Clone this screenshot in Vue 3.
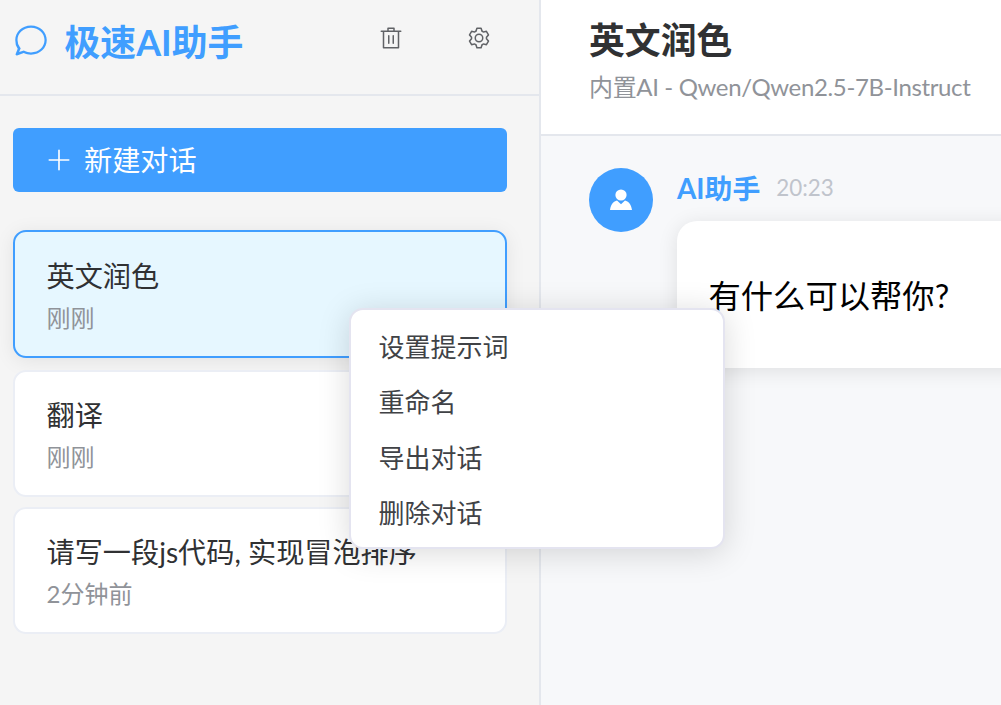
<script setup>
const items = [
  { title: '英文润色', time: '刚刚', active: true },
  { title: '翻译', time: '刚刚', active: false },
  { title: '请写一段js代码, 实现冒泡排序', time: '2分钟前', active: false },
]
const menu = ['设置提示词', '重命名', '导出对话', '删除对话']
</script>

<template>
  <div class="app">
    <aside class="sidebar">
      <header class="side-head">
        <div class="brand">
          <svg class="chat" viewBox="0 0 1024 1024"><path fill="currentColor" d="m174.72 855.68 135.296-45.12 23.936 12.352C382.72 848.256 444.16 864 512 864c223.744 0 384-159.872 384-352 0-192.832-159.104-352-384-352S128 319.168 128 512a341.12 341.12 0 0 0 69.248 204.288l21.632 28.8-44.16 110.528zm-59.52 94.272a32 32 0 0 1-40.64-41.984l59.456-148.672A404.48 404.48 0 0 1 64 512C64 284.8 255.04 96 512 96s448 188.8 448 416-191.04 416-448 416c-73.6 0-143.68-15.552-206.08-43.456z"/></svg>
          <h1>极速AI助手</h1>
        </div>
        <svg class="tool trash" viewBox="0 0 1024 1024"><path fill="currentColor" d="M160 256H96a32 32 0 0 1 0-64h256V95.936a32 32 0 0 1 32-32h256a32 32 0 0 1 32 32V192h256a32 32 0 1 1 0 64h-64v672a32 32 0 0 1-32 32H192a32 32 0 0 1-32-32zm448-64v-64H416v64zM224 896h576V256H224zm192-128a32 32 0 0 1-32-32V416a32 32 0 0 1 64 0v320a32 32 0 0 1-32 32m192 0a32 32 0 0 1-32-32V416a32 32 0 0 1 64 0v320a32 32 0 0 1-32 32"/></svg>
        <svg class="tool gear" viewBox="0 0 1024 1024"><path fill="currentColor" d="M600.704 64a32 32 0 0 1 30.464 22.208l35.2 109.376c14.784 7.232 28.928 15.36 42.432 24.512l112.384-24.192a32 32 0 0 1 34.432 15.36L944.32 364.8a32 32 0 0 1-4.032 37.504l-77.12 85.12a357.12 357.12 0 0 1 0 49.024l77.12 85.248a32 32 0 0 1 4.032 37.504l-88.704 153.6a32 32 0 0 1-34.432 15.296L708.8 803.904c-13.44 9.088-27.648 17.28-42.368 24.512l-35.264 109.376A32 32 0 0 1 600.704 960H423.296a32 32 0 0 1-30.464-22.208L357.696 828.48a351.616 351.616 0 0 1-42.56-24.64l-112.32 24.256a32 32 0 0 1-34.432-15.36L79.68 659.2a32 32 0 0 1 4.032-37.504l77.12-85.248a357.12 357.12 0 0 1 0-48.896l-77.12-85.248A32 32 0 0 1 79.68 364.8l88.704-153.6a32 32 0 0 1 34.432-15.296l112.32 24.256c13.568-9.152 27.776-17.408 42.56-24.64l35.2-109.312A32 32 0 0 1 423.232 64H600.64zm-23.424 64H446.72l-36.352 113.088-24.512 11.968a294.113 294.113 0 0 0-34.816 20.096l-22.656 15.36-116.224-25.088-65.28 113.152 79.68 88.192-1.92 27.136a293.12 293.12 0 0 0 0 40.192l1.92 27.136-79.808 88.192 65.344 113.152 116.224-25.024 22.656 15.296a294.113 294.113 0 0 0 34.816 20.096l24.512 11.968L446.72 896h130.688l36.48-113.152 24.448-11.904a288.282 288.282 0 0 0 34.752-20.096l22.592-15.296 116.288 25.024 65.28-113.152-79.744-88.192 1.92-27.136a293.12 293.12 0 0 0 0-40.256l-1.92-27.136 79.808-88.128-65.344-113.152-116.288 24.96-22.592-15.232a287.616 287.616 0 0 0-34.752-20.096l-24.448-11.904L577.344 128zM512 320a192 192 0 1 1 0 384 192 192 0 0 1 0-384m0 64a128 128 0 1 0 0 256 128 128 0 0 0 0-256"/></svg>
      </header>

      <div class="side-body">
        <button class="new-chat">
          <svg class="plus" viewBox="0 0 1024 1024"><path fill="currentColor" d="M480 480V128a32 32 0 0 1 64 0v352h352a32 32 0 0 1 0 64H544v352a32 32 0 1 1-64 0V544H128a32 32 0 0 1 0-64z"/></svg>
          <span>新建对话</span>
        </button>
        <ul class="list">
          <li v-for="item in items" :key="item.title" class="item" :class="{ active: item.active }">
            <div class="item-title">{{ item.title }}</div>
            <div class="item-time">{{ item.time }}</div>
          </li>
        </ul>
      </div>
    </aside>

    <main class="main">
      <header class="main-head">
        <h2>英文润色</h2>
        <p>内置AI - Qwen/Qwen2.5-7B-Instruct</p>
      </header>
      <section class="messages">
        <div class="avatar">
          <svg viewBox="0 0 24 24" width="24" height="24"><circle cx="12" cy="7" r="5.6" fill="#fff"/><path fill="#fff" d="M8 12.6 12 16.2l4-3.6c3.4 1 6 3.2 7 9.4H1c1-6.200 3.600-8.400 7-9.400z"/></svg>
        </div>
        <div class="msg">
          <div class="msg-meta"><strong>AI助手</strong><span>20:23</span></div>
          <div class="bubble">有什么可以帮你?</div>
        </div>
      </section>
    </main>

    <ul class="menu">
      <li v-for="m in menu" :key="m">{{ m }}</li>
    </ul>
  </div>
</template>

<style>
html, body { margin: 0; padding: 0; overflow: hidden; }
</style>

<style scoped>
.app {
  position: relative;
  display: flex;
  width: 1001px;
  height: 705px;
  overflow: hidden;
  font-family: Lato, "Noto Sans CJK SC", sans-serif;
  background: #f5f5f5;
}
h1, h2, p, ul { margin: 0; padding: 0; }
ul { list-style: none; }

.sidebar {
  width: 539px;
  flex: none;
  box-sizing: border-box;
  background: #f5f5f5;
  display: flex;
  flex-direction: column;
}
.side-head {
  height: 96px;
  box-sizing: border-box;
  border-bottom: 2px solid #e4e7ed;
  display: flex;
  align-items: flex-start;
  padding: 22px 48px 0 12.500px;
}
.brand {
  display: flex;
  align-items: center;
  gap: 16px;
  flex: 1;
  color: #409eff;
}
.chat { width: 36px; height: 36px; margin-bottom: 6px; }
.brand h1 { font-size: 35.84px; line-height: 38px; font-weight: 700; color: #409eff; }
.tool { width: 24px; height: 24px; color: #606266; margin-top: 4px; }
.trash { margin-right: 64px; }

.side-body { padding: 32px 32px 0 13px; }
.new-chat {
  width: 100%;
  height: 64px;
  border: 0;
  border-radius: 6px;
  background: #409eff;
  color: #fff;
  font: inherit;
  font-size: 28.16px;
  display: flex;
  align-items: center;
  padding: 0 0 4px 33px;
  gap: 12px;
}
.plus { width: 26px; height: 26px; margin-top: 4px; }
.list { margin-top: 38px; }
.item {
  box-sizing: border-box;
  height: 127px;
  margin-bottom: 10px;
  padding: 20px 31.500px 0;
  background: #fff;
  border: 2px solid #ebeef5;
  border-radius: 13px;
  white-space: nowrap;
  overflow: hidden;
}
.item.active {
  height: 128px;
  margin-bottom: 12px;
  padding-top: 21px;
  background: #e6f7ff;
  border-color: #409eff;
  box-shadow: 0 3px 20px rgba(0, 0, 0, 0.08);
}
.item-title { font-size: 28.16px; line-height: 46px; color: #303133; }
.item-time { font-size: 24px; line-height: 38px; color: #909399; }

.main {
  flex: 1;
  min-width: 0;
  box-sizing: border-box;
  border-left: 2px solid #e4e7ed;
  display: flex;
  flex-direction: column;
  background: #f7f8fa;
}
.main-head {
  height: 136px;
  box-sizing: border-box;
  flex: none;
  background: #fff;
  border-bottom: 2px solid #e4e7ed;
  padding: 17px 0 0 48px;
}
.main-head h2 { font-size: 35.84px; line-height: 48px; font-weight: 700; color: #303133; }
.main-head p { font-size: 24px; line-height: 44px; letter-spacing: -0.36px; color: #909399; white-space: nowrap; }

.messages { display: flex; padding: 32px 0 0 48px; gap: 24px; }
.avatar {
  width: 64px;
  height: 64px;
  flex: none;
  border-radius: 50%;
  background: #409eff;
  display: flex;
  align-items: center;
  justify-content: center;
}
.msg { flex: none; width: 520px; }
.msg-meta { display: flex; align-items: center; height: 38px; gap: 16px; margin-bottom: 15px; }
.msg-meta strong { font-size: 27.840px; font-weight: 700; color: #409eff; }
.msg-meta span { font-size: 22.400px; color: #c0c4cc; }
.bubble {
  height: 147px;
  box-sizing: border-box;
  padding: 51px 31.500px 0;
  background: #fff;
  border-radius: 20px;
  font-size: 32.320px;
  line-height: 48px;
  color: #000;
  box-shadow: 0 3px 20px rgba(0, 0, 0, 0.1);
}

.menu {
  position: absolute;
  left: 349px;
  top: 308px;
  width: 376px;
  height: 241px;
  box-sizing: border-box;
  padding: 9.500px 0;
  background: #fff;
  border: 2px solid #e4e4f0;
  border-radius: 14px;
  box-shadow: 0 4px 32px rgba(0, 0, 0, 0.15);
}
.menu li {
  height: 55.500px;
  line-height: 55.500px;
  padding-left: 27.500px;
  font-size: 26px;
  color: #404246;
}
</style>
